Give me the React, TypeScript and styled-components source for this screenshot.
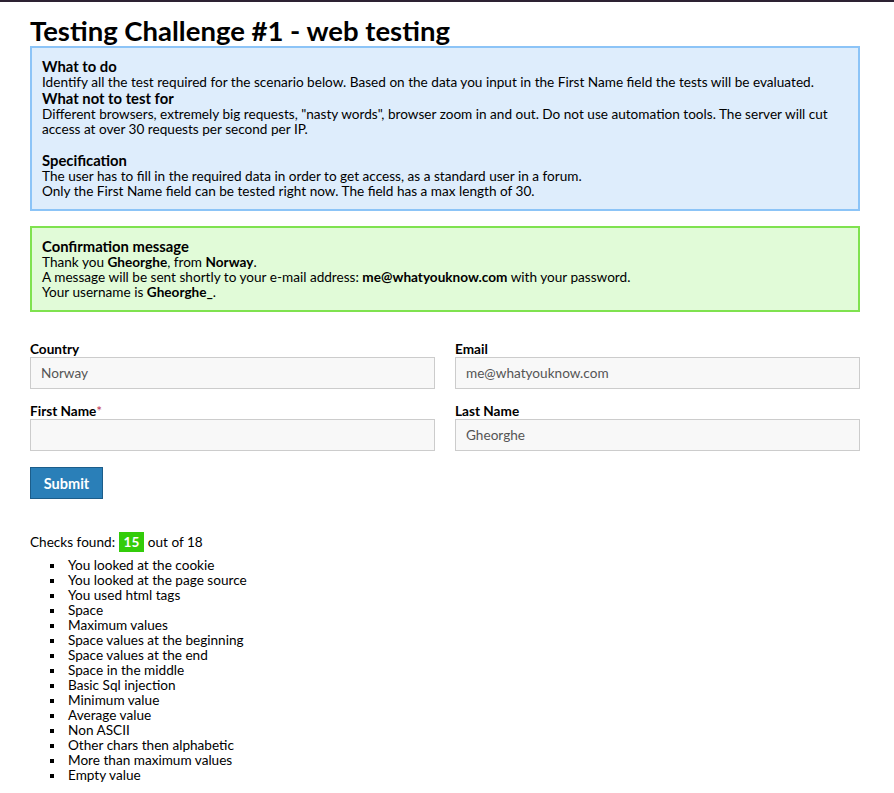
import React from "react";
import styled, { createGlobalStyle } from "styled-components";

const Global = createGlobalStyle`
  html, body { margin: 0; padding: 0; background: #fff; }
  body {
    font-family: "Lato", "DejaVu Sans", sans-serif;
    font-size: 13.6px;
    color: #000;
    border-top: 2px solid #2d2233;
  }
`;

const Page = styled.div`
  width: 830px;
  margin-left: 30px;
  padding-top: 14px;
  padding-bottom: 10px;
`;

const Title = styled.h1`
  margin: 0;
  font-size: 27.5px;
  line-height: 30px;
  font-weight: 700;
`;

const InfoBox = styled.div<{ $tone: "blue" | "green" }>`
  border: 2px solid ${(p) => (p.$tone === "blue" ? "#8cc4f7" : "#7fe24f")};
  background: ${(p) => (p.$tone === "blue" ? "#deedfc" : "#e1fbd8")};
  padding: 10px;
  margin-bottom: 15px;
`;

const BoxHeading = styled.h3`
  margin: 0;
  font-size: 14.8px;
  line-height: 17px;
  font-weight: 700;
`;

const BoxText = styled.p`
  margin: 0;
  line-height: 15px;
`;

const Spacer = styled.div`
  height: 15px;
`;

const Form = styled.form`
  margin-top: 29px;
  display: grid;
  grid-template-columns: 1fr 1fr;
  column-gap: 20px;
  row-gap: 14px;
`;

const Field = styled.div`
  display: flex;
  flex-direction: column;
`;

const Label = styled.label`
  font-size: 13.6px;
  line-height: 16px;
  font-weight: 700;
`;

const Req = styled.span`
  color: #c0304f;
  font-weight: 400;
`;

const Input = styled.input`
  box-sizing: border-box;
  height: 32px;
  border: 1px solid #cccccc;
  background: #f8f8f8;
  padding: 0 10px;
  font-family: inherit;
  font-size: 13.6px;
  color: #555;
  outline: none;
`;

const Submit = styled.button`
  display: block;
  margin-top: 16px;
  width: 73px;
  height: 32px;
  background: #2a7fb8;
  border: 1px solid #1c5d8a;
  color: #fff;
  font-family: inherit;
  font-size: 14.5px;
  font-weight: 700;
  cursor: pointer;
`;

const Checks = styled.div`
  margin-top: 33px;
  line-height: 20px;
`;

const Badge = styled.span`
  display: inline-block;
  background: #33cc0a;
  color: #fff;
  font-weight: 700;
  padding: 0 5px;
  line-height: 20px;
`;

const List = styled.ul`
  margin: 6px 0 0;
  padding-left: 38px;
  list-style: none;
`;

const Item = styled.li`
  line-height: 15px;
  &::before {
    content: "";
    display: inline-block;
    width: 4px;
    height: 4px;
    background: #000;
    margin-left: -18px;
    margin-right: 14px;
    vertical-align: 2px;
  }
`;

const checks = [
  "You looked at the cookie",
  "You looked at the page source",
  "You used html tags",
  "Space",
  "Maximum values",
  "Space values at the beginning",
  "Space values at the end",
  "Space in the middle",
  "Basic Sql injection",
  "Minimum value",
  "Average value",
  "Non ASCII",
  "Other chars then alphabetic",
  "More than maximum values",
  "Empty value",
];

export default function App() {
  return (
    <>
      <Global />
      <Page>
        <Title>Testing Challenge #1 - web testing</Title>
        <InfoBox $tone="blue">
          <BoxHeading>What to do</BoxHeading>
          <BoxText>
            Identify all the test required for the scenario below. Based on the data you input in the First Name field the tests will be evaluated.
          </BoxText>
          <BoxHeading>What not to test for</BoxHeading>
          <BoxText>
            Different browsers, extremely big requests, "nasty words", browser zoom in and out. Do not use automation tools. The server will cut access at over 30 requests per second per IP.
          </BoxText>
          <Spacer />
          <BoxHeading>Specification</BoxHeading>
          <BoxText>
            The user has to fill in the required data in order to get access, as a standard user in a forum.
            <br />
            Only the First Name field can be tested right now. The field has a max length of 30.
          </BoxText>
        </InfoBox>
        <InfoBox $tone="green">
          <BoxHeading>Confirmation message</BoxHeading>
          <BoxText>
            Thank you <b>Gheorghe</b>, from <b>Norway</b>.
            <br />
            A message will be sent shortly to your e-mail address: <b>me@whatyouknow.com</b> with your password.
            <br />
            Your username is <b>Gheorghe_</b>.
          </BoxText>
        </InfoBox>
        <Form onSubmit={(e) => e.preventDefault()}>
          <Field>
            <Label>Country</Label>
            <Input defaultValue="Norway" />
          </Field>
          <Field>
            <Label>Email</Label>
            <Input defaultValue="me@whatyouknow.com" />
          </Field>
          <Field>
            <Label>
              First Name<Req>*</Req>
            </Label>
            <Input defaultValue="" />
          </Field>
          <Field>
            <Label>Last Name</Label>
            <Input defaultValue="Gheorghe" />
          </Field>
        </Form>
        <Submit type="button">Submit</Submit>
        <Checks>
          Checks found: <Badge>15</Badge> out of 18
        </Checks>
        <List>
          {checks.map((c) => (
            <Item key={c}>{c}</Item>
          ))}
        </List>
      </Page>
    </>
  );
}
